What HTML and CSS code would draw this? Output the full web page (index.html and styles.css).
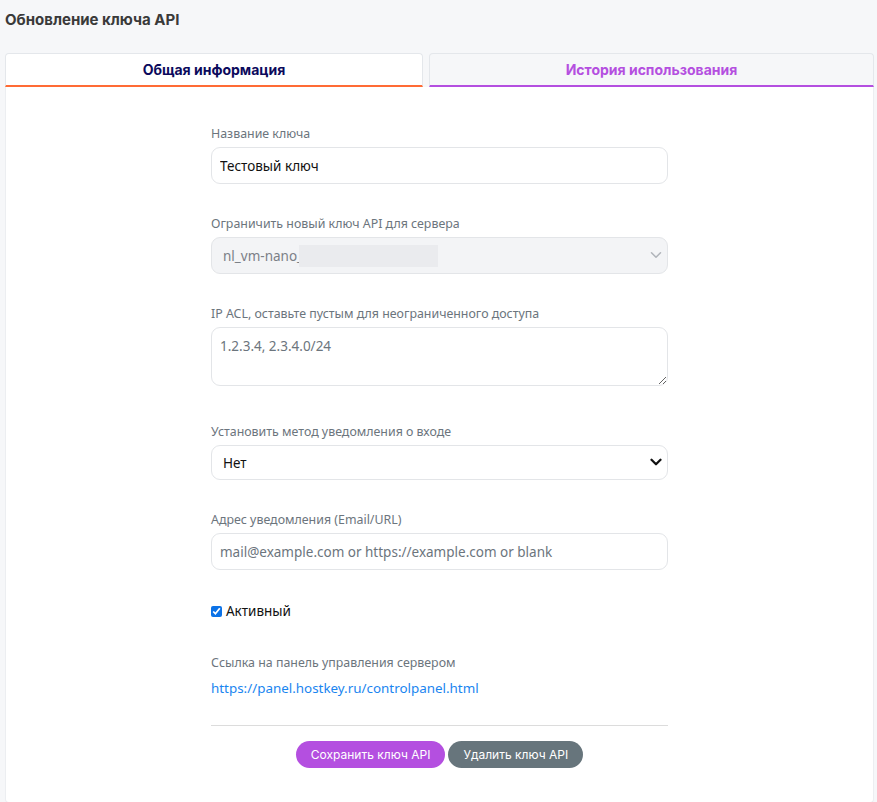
FILE: index.html
```html
<!DOCTYPE html>
<html lang="ru">
  <head>
    <meta charset="UTF-8" />
    <meta name="viewport" content="width=device-width, initial-scale=1.0" />
    <title>Обновление ключа API</title>
    <link rel="stylesheet" href="styles.css">
  </head>
  <body>
    <h1 class="page-title">Обновление ключа API</h1>

    <div class="tabs">
      <button class="tab tab-active">Общая информация</button>
      <button class="tab tab-history">История использования</button>
    </div>

    <main class="panel">
      <form class="key-form">
        <div class="form-group">
          <label for="keyname">Название ключа</label>
          <input class="field" type="text" id="keyname" value="Тестовый ключ" />
        </div>

        <div class="form-group">
          <label for="server">Ограничить новый ключ API для сервера</label>
          <div class="select-wrap">
            <select class="field field-select" id="server" disabled>
              <option>nl_vm-nano_</option>
            </select>
            <span class="masked"></span>
            <svg class="chevron chevron-muted" width="12" height="12" viewBox="0 0 16 16">
              <path d="M2 5l6 6 6-6" fill="none" stroke="currentColor" stroke-width="2" stroke-linecap="round" stroke-linejoin="round"/>
            </svg>
          </div>
        </div>

        <div class="form-group group-wide">
          <label for="acl">IP ACL, оставьте пустым для неограниченного доступа</label>
          <textarea class="field field-area" id="acl" placeholder="1.2.3.4, 2.3.4.0/24"></textarea>
        </div>

        <div class="form-group">
          <label for="notify">Установить метод уведомления о входе</label>
          <div class="select-wrap">
            <select class="field field-select field-short" id="notify">
              <option>Нет</option>
              <option>Email</option>
              <option>Webhook</option>
            </select>
            <svg class="chevron" width="12" height="12" viewBox="0 0 16 16">
              <path d="M2 5l6 6 6-6" fill="none" stroke="currentColor" stroke-width="3" stroke-linecap="round" stroke-linejoin="round"/>
            </svg>
          </div>
        </div>

        <div class="form-group">
          <label for="address">Адрес уведомления (Email/URL)</label>
          <input class="field" type="text" id="address" placeholder="mail@example.com or https://example.com or blank" />
        </div>

        <div class="check-row">
          <input type="checkbox" id="active" checked />
          <label for="active">Активный</label>
        </div>

        <div class="panel-link">
          <span class="link-title">Ссылка на панель управления сервером</span>
          <a href="#">https://panel.hostkey.ru/controlpanel.html</a>
        </div>

        <hr />

        <div class="actions">
          <button type="button" class="btn btn-save">Сохранить ключ API</button>
          <button type="button" class="btn btn-delete">Удалить ключ API</button>
        </div>
      </form>
    </main>
  </body>
</html>
```

FILE: styles.css
```css
* {
  box-sizing: border-box;
}

body {
  margin: 0;
  padding: 0 3px 0 5px;
  background-color: #f6f7f9;
  font-family: "Noto Sans", "Open Sans", sans-serif;
  color: #212529;
}

.page-title {
  margin: 0;
  padding: 10px 0 0;
  height: 53px;
  font-family: Inter, sans-serif;
  font-size: 15px;
  font-weight: 700;
  color: #3a3a3a;
}

.tabs {
  display: flex;
  gap: 6px;
}

.tab {
  height: 34px;
  border: 1px solid #e4e7eb;
  border-bottom-width: 2px;
  border-radius: 4px 4px 0 0;
  font-family: Inter, sans-serif;
  font-size: 14px;
  font-weight: 700;
  cursor: pointer;
}

.tab-active {
  width: 418px;
  background-color: #ffffff;
  color: #0b0a5c;
  border-bottom-color: #ff6b35;
}

.tab-history {
  flex: 1;
  background-color: #f6f7f9;
  color: #b44fe0;
  border-bottom-color: #b44fe0;
}

.panel {
  background-color: #ffffff;
  border: 1px solid #eceef1;
  border-top: none;
  border-radius: 0 0 4px 4px;
  min-height: 716px;
  padding: 38px 0 30px;
}

.key-form {
  width: 457px;
  margin-left: 205px;
}

.form-group {
  margin-bottom: 31px;
}

.group-wide {
  margin-bottom: 37px;
}

.form-group label {
  display: block;
  font-size: 12.4px;
  line-height: 18px;
  color: #6c757d;
  margin-bottom: 4px;
}

.field {
  display: block;
  width: 100%;
  height: 37px;
  padding: 0 8px;
  border: 1px solid #e3e5e8;
  border-radius: 9px;
  background-color: #ffffff;
  font-family: "Noto Sans", "Open Sans", sans-serif;
  font-size: 13.5px;
  color: #111111;
  outline: none;
}

.field::placeholder {
  color: #6c757d;
}

.field-area {
  height: 59px;
  padding: 9px 8px;
  resize: vertical;
}

.select-wrap {
  position: relative;
}

.field-select {
  appearance: none;
  padding: 0 11px;
}

.field-select:disabled {
  background-color: #f3f4f6;
  color: #7b8087;
  opacity: 1;
}

.field-short {
  height: 35px;
}

/* hidden part of the server name */
.masked {
  position: absolute;
  left: 88px;
  top: 8px;
  width: 139px;
  height: 22px;
  background-color: #eaebee;
}

.chevron {
  position: absolute;
  right: 6px;
  top: 12px;
  color: #111111;
  pointer-events: none;
}

.field-short + .chevron {
  top: 11px;
}

.chevron-muted {
  color: #b0b4ba;
}

.check-row {
  display: flex;
  align-items: center;
  gap: 4px;
  height: 20px;
  margin-top: 29px;
  font-size: 13.5px;
  color: #111111;
}

.check-row input {
  margin: 0;
  width: 11px;
  height: 11px;
  accent-color: #0b72e7;
}

.panel-link {
  margin-top: 33px;
}

.link-title {
  display: block;
  font-size: 12.4px;
  color: #6c757d;
  line-height: 18px;
  margin-bottom: 6px;
}

.panel-link a {
  display: block;
  font-size: 13.4px;
  line-height: 20px;
  color: #1a85f0;
  text-decoration: none;
}

hr {
  border: none;
  border-top: 1px solid #dcdcdc;
  margin: 27px 0 15px;
}

.actions {
  display: flex;
  justify-content: center;
  gap: 3px;
}

.btn {
  height: 27px;
  padding: 0 15px;
  border: none;
  border-radius: 14px;
  font-family: Inter, sans-serif;
  font-size: 12px;
  color: #ffffff;
  cursor: pointer;
}

.btn-save {
  background-color: #b44fe0;
}

.btn-delete {
  background-color: #67757c;
}
```
